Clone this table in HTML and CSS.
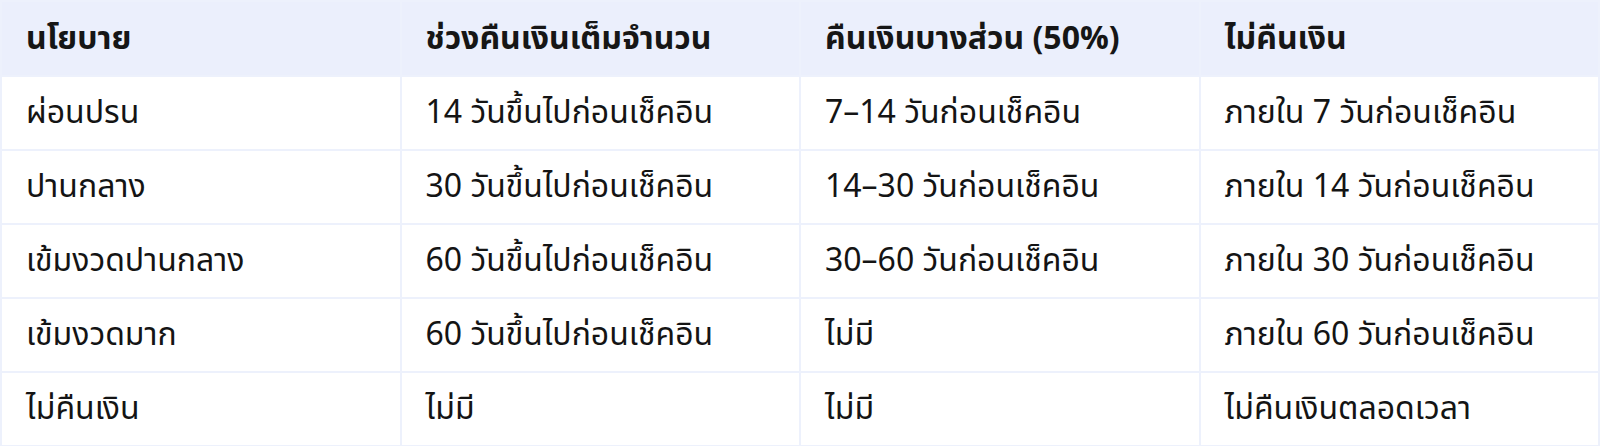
FILE: index.html
```html
<!DOCTYPE html>
<html lang="th">
<head>
<meta charset="utf-8">
<link rel="stylesheet" href="styles.css">
</head>
<body>
<table class="policy">
  <thead>
    <tr>
      <th>นโยบาย</th>
      <th>ช่วงคืนเงินเต็มจำนวน</th>
      <th>คืนเงินบางส่วน (50%)</th>
      <th>ไม่คืนเงิน</th>
    </tr>
  </thead>
  <tbody>
    <tr><td>ผ่อนปรน</td><td>14 วันขึ้นไปก่อนเช็คอิน</td><td>7–14 วันก่อนเช็คอิน</td><td>ภายใน 7 วันก่อนเช็คอิน</td></tr>
    <tr><td>ปานกลาง</td><td>30 วันขึ้นไปก่อนเช็คอิน</td><td>14–30 วันก่อนเช็คอิน</td><td>ภายใน 14 วันก่อนเช็คอิน</td></tr>
    <tr><td>เข้มงวดปานกลาง</td><td>60 วันขึ้นไปก่อนเช็คอิน</td><td>30–60 วันก่อนเช็คอิน</td><td>ภายใน 30 วันก่อนเช็คอิน</td></tr>
    <tr><td>เข้มงวดมาก</td><td>60 วันขึ้นไปก่อนเช็คอิน</td><td>ไม่มี</td><td>ภายใน 60 วันก่อนเช็คอิน</td></tr>
    <tr><td>ไม่คืนเงิน</td><td>ไม่มี</td><td>ไม่มี</td><td>ไม่คืนเงินตลอดเวลา</td></tr>
  </tbody>
</table>
</body>
</html>
```
FILE: styles.css
```css
html, body {
  margin: 0;
  padding: 0;
  background: #ffffff;
}
.policy {
  width: 1600px;
  border-collapse: collapse;
  table-layout: fixed;
  font-family: "Noto Sans Thai", "Noto Sans", sans-serif;
  font-size: 32px;
  line-height: 44px;
  color: #141414;
}
.policy th,
.policy td {
  border: 2px solid #edf1fc;
  padding: 0 24px;
  text-align: left;
  vertical-align: middle;
}
.policy th {
  background: #ebeffc;
  font-weight: 700;
  height: 73px;
  color: #161616;
}
.policy td {
  height: 72px;
}
```
